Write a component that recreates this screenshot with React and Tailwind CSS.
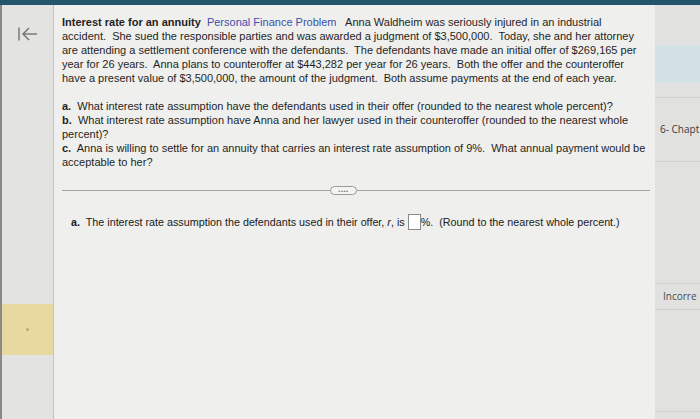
import React from "react";

const intro = [
  "accident.  She sued the responsible parties and was awarded a judgment of $3,500,000.  Today, she and her attorney",
  "are attending a settlement conference with the defendants.  The defendants have made an initial offer of $269,165 per",
  "year for 26 years.  Anna plans to counteroffer at $443,282 per year for 26 years.  Both the offer and the counteroffer",
  "have a present value of $3,500,000, the amount of the judgment.  Both assume payments at the end of each year.",
];

function BackIcon() {
  return (
    <svg width="20" height="14" viewBox="0 0 20 14" fill="none" stroke="#6b6b6b" strokeWidth="1.3">
      <line x1="1" y1="0.5" x2="1" y2="13.5" />
      <line x1="5" y1="7" x2="19" y2="7" />
      <polyline points="11,1 5,7 11,13" />
    </svg>
  );
}

export default function App() {
  return (
    <div className="w-[700px] h-[419px] overflow-hidden flex flex-col bg-[#e6e6e4] font-['Liberation_Sans',Arial,sans-serif]">
      <div className="h-[5px] bg-[#24566b]" />
      <div className="flex flex-1">
        {/* sidebar */}
        <div className="w-[54px] flex flex-col bg-[#e3e3e1] border-r border-[#c4c4c2] border-l-2 border-l-[#8a8a8a]">
          <div className="mt-[22px] ml-[16px]">
            <BackIcon />
          </div>
          <div className="mt-[263px] h-[51px] bg-[#e8d9a0] flex items-center justify-center">
            <div className="w-[3px] h-[3px] rounded-full bg-[#b9a870]" />
          </div>
        </div>

        {/* main panel */}
        <div className="w-[601px] bg-[#efefed] pl-[8px] pr-[5px] pt-[10px] text-[11px] leading-[14px] text-[#1f1f1f]">
          <div className="whitespace-pre">
            <span className="font-bold">Interest rate for an annuity</span>
            {"  "}
            <span className="text-[#3b4fae]">Personal Finance Problem</span>
            {"   Anna Waldheim was seriously injured in an industrial"}
          </div>
          {intro.map((l) => (
            <div key={l} className="whitespace-pre">{l}</div>
          ))}

          <div className="mt-[14px]">
            <div className="whitespace-pre">
              <span className="font-bold">a.</span>
              {"  What interest rate assumption have the defendants used in their offer (rounded to the nearest whole percent)?"}
            </div>
            <div className="whitespace-pre">
              <span className="font-bold">b.</span>
              {"  What interest rate assumption have Anna and her lawyer used in their counteroffer (rounded to the nearest whole"}
            </div>
            <div className="whitespace-pre">percent)?</div>
            <div className="whitespace-pre">
              <span className="font-bold">c.</span>
              {"  Anna is willing to settle for an annuity that carries an interest rate assumption of 9%.  What annual payment would be"}
            </div>
            <div className="whitespace-pre">acceptable to her?</div>
          </div>

          <div className="mt-[17px] flex items-center">
            <div className="w-[268px] h-px bg-[#a3a3a1]" />
            <div className="w-[27px] h-[9px] rounded-full border border-[#9a9a98] bg-[#f4f4f2] flex items-center justify-center text-[6px] leading-none text-[#777] tracking-[0.5px]">
              ••••
            </div>
            <div className="flex-1 h-px bg-[#a3a3a1]" />
          </div>

          <div className="mt-[19px] ml-[9px] flex items-center whitespace-pre text-[10.75px] text-[#202020]">
            <span className="font-bold">a.</span>
            <span>{"  The interest rate assumption the defendants used in their offer, "}</span>
            <span className="italic">r</span>
            <span>{", is "}</span>
            <span className="inline-block w-[13px] h-[16px] border border-[#8a8a8a] bg-white" />
            <span>{"%.  (Round to the nearest whole percent.)"}</span>
          </div>
        </div>

        {/* right strip */}
        <div className="flex-1 flex flex-col bg-[#e1e2e0] font-['Open_Sans',sans-serif] text-[10px] text-[#3a3a3a] whitespace-nowrap overflow-hidden">
          <div className="mt-[40px] h-[38px] bg-[#d2e1e4]" />
          <div className="mt-[14px] h-[65px] border-t border-[#d0d0ce] border-b flex items-center pl-[5px]">
            6- Chapt
          </div>
          <div className="mt-[121px] h-[27px] border-t border-b border-[#cfcfcd] flex items-center pl-[8px] text-[#4a4a4a]">
            Incorre
          </div>
          <div className="mt-[101px] border-t border-[#cfcfcd]" />
        </div>
      </div>
    </div>
  );
}
